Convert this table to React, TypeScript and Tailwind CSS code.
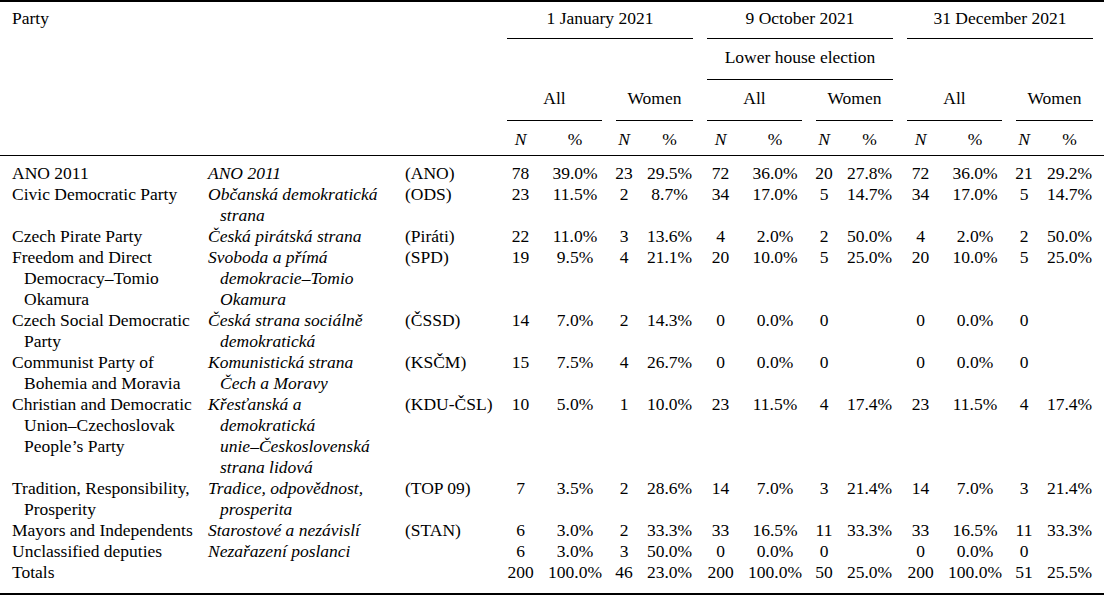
import React from "react";

type Row = {
  en: React.ReactNode;
  cz: React.ReactNode;
  ab: string;
  v: string[];
};

const NW = (s: string) => <span className="whitespace-nowrap">{s}</span>;

const rows: Row[] = [
  { en: "ANO 2011", cz: "ANO 2011", ab: "(ANO)", v: ["78", "39.0%", "23", "29.5%", "72", "36.0%", "20", "27.8%", "72", "36.0%", "21", "29.2%"] },
  { en: "Civic Democratic Party", cz: "Občanská demokratická strana", ab: "(ODS)", v: ["23", "11.5%", "2", "8.7%", "34", "17.0%", "5", "14.7%", "34", "17.0%", "5", "14.7%"] },
  { en: "Czech Pirate Party", cz: "Česká pirátská strana", ab: "(Piráti)", v: ["22", "11.0%", "3", "13.6%", "4", "2.0%", "2", "50.0%", "4", "2.0%", "2", "50.0%"] },
  {
    en: <>Freedom and Direct {NW("Democracy–Tomio")} Okamura</>,
    cz: <>Svoboda a přímá {NW("demokracie–Tomio")} Okamura</>,
    ab: "(SPD)",
    v: ["19", "9.5%", "4", "21.1%", "20", "10.0%", "5", "25.0%", "20", "10.0%", "5", "25.0%"],
  },
  { en: "Czech Social Democratic Party", cz: "Česká strana sociálně demokratická", ab: "(ČSSD)", v: ["14", "7.0%", "2", "14.3%", "0", "0.0%", "0", "", "0", "0.0%", "0", ""] },
  { en: "Communist Party of Bohemia and Moravia", cz: "Komunistická strana Čech a Moravy", ab: "(KSČM)", v: ["15", "7.5%", "4", "26.7%", "0", "0.0%", "0", "", "0", "0.0%", "0", ""] },
  {
    en: <>Christian and Democratic {NW("Union–Czechoslovak")} People’s Party</>,
    cz: <>Křesťanská a demokratická {NW("unie–Československá")} strana lidová</>,
    ab: "(KDU-ČSL)",
    v: ["10", "5.0%", "1", "10.0%", "23", "11.5%", "4", "17.4%", "23", "11.5%", "4", "17.4%"],
  },
  { en: "Tradition, Responsibility, Prosperity", cz: "Tradice, odpovědnost, prosperita", ab: "(TOP 09)", v: ["7", "3.5%", "2", "28.6%", "14", "7.0%", "3", "21.4%", "14", "7.0%", "3", "21.4%"] },
  { en: "Mayors and Independents", cz: "Starostové a nezávislí", ab: "(STAN)", v: ["6", "3.0%", "2", "33.3%", "33", "16.5%", "11", "33.3%", "33", "16.5%", "11", "33.3%"] },
  { en: "Unclassified deputies", cz: "Nezařazení poslanci", ab: "", v: ["6", "3.0%", "3", "50.0%", "0", "0.0%", "0", "", "0", "0.0%", "0", ""] },
  { en: "Totals", cz: "", ab: "", v: ["200", "100.0%", "46", "23.0%", "200", "100.0%", "50", "25.0%", "200", "100.0%", "51", "25.5%"] },
];

const colW = ["w-[41px]", "w-[68px]", "w-[30px]", "w-[61px]"];

function Group({ date, sub }: { date: string; sub?: string }) {
  return (
    <div className="flex w-[200px] flex-col">
      <div className="pt-[6px] pb-[9px] text-center">{date}</div>
      <div className="mx-[7px] h-px bg-black" />
      <div className="pt-[8px] pb-[11px] text-center">{sub ? sub : "\u00a0"}</div>
      <div className={sub ? "mx-[7px] h-px bg-black" : "mx-[7px] h-px"} />
      <div className="flex">
        <div className="flex w-[109px] flex-col">
          <div className="pt-[8px] pb-[11px] text-center">All</div>
          <div className="mx-[7px] h-px bg-black" />
        </div>
        <div className="flex w-[91px] flex-col">
          <div className="pt-[8px] pb-[11px] text-center">Women</div>
          <div className="mx-[7px] h-px bg-black" />
        </div>
      </div>
      <div className="flex pt-[8px] pb-[5px]">
        <div className="w-[41px] text-center italic">N</div>
        <div className="w-[68px] text-center">%</div>
        <div className="w-[30px] text-center italic">N</div>
        <div className="w-[61px] text-center">%</div>
      </div>
    </div>
  );
}

export default function App() {
  return (
    <div className="h-[595px] w-[1104px] overflow-hidden bg-white [font-family:Liberation_Serif,Times_New_Roman,serif] text-[17.5px] leading-[21px] text-black">
      <div className="h-[2px] bg-black" />
      <div className="flex">
        <div className="w-[500px] pt-[6px] pl-[12px]">Party</div>
        <Group date="1 January 2021" />
        <Group date="9 October 2021" sub="Lower house election" />
        <Group date="31 December 2021" />
      </div>
      <div className="h-px bg-black" />
      <div className="flex flex-col pt-[7px] pb-[10px]">
        {rows.map((r, i) => (
          <div key={i} className="flex items-start">
            <div className="w-[202px] pr-[2px] pl-[24px] -indent-[12px]">{r.en}</div>
            <div className="w-[191px] pr-[6px] pl-[18px] -indent-[12px] italic">{r.cz}</div>
            <div className="w-[107px] pl-[12px] whitespace-nowrap">{r.ab}</div>
            {r.v.map((x, j) => (
              <div key={j} className={`${colW[j % 4]} text-center whitespace-nowrap`}>
                {x}
              </div>
            ))}
          </div>
        ))}
      </div>
      <div className="h-[2px] bg-black" />
    </div>
  );
}
